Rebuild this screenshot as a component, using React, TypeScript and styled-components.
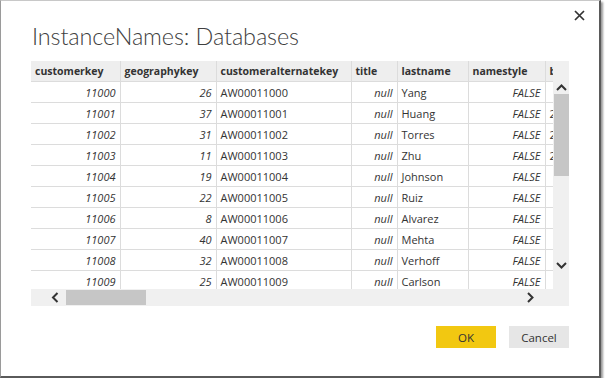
import React from "react";
import styled, { createGlobalStyle } from "styled-components";

const Global = createGlobalStyle`
  html, body { margin: 0; padding: 0; background: #ffffff; }
  body { font-family: "Open Sans", "Noto Sans", sans-serif; color: #333; }
`;

const Dialog = styled.div`
  position: relative;
  box-sizing: border-box;
  width: 601px;
  height: 378px;
  border-left: 1px solid #9a9a9a;
  border-top: 1px solid #c8c8c8;
  border-right: 2px solid #5a5a5a;
  border-bottom: 2px solid #5a5a5a;
  box-shadow: 2px 2px 2px rgba(0, 0, 0, 0.4);
  background: #fff;
  display: flex;
  flex-direction: column;
`;

const TopBar = styled.div`
  height: 19px;
  display: flex;
  justify-content: flex-end;
  align-items: flex-end;
  padding-right: 14px;
`;

const CloseButton = styled.div`
  width: 12px;
  height: 12px;
  display: flex;
  align-items: center;
  justify-content: center;
  margin-bottom: -1px;
`;

const Title = styled.h1`
  margin: 1px 0 0 31px;
  font-family: "Lato", "Open Sans", sans-serif;
  font-weight: 300;
  font-size: 23.4px;
  line-height: 30px;
  color: #404040;
  letter-spacing: -0.1px;
`;

const GridBox = styled.div`
  margin: 10px 0 0 30px;
  width: 538px;
  height: 245px;
  display: flex;
  flex-direction: column;
  background: #f0f0f0;
`;

const GridMain = styled.div`
  display: flex;
  height: 228px;
`;

const Viewport = styled.div`
  width: 522px;
  height: 228px;
  overflow: hidden;
  background: #fff;
`;

const Table = styled.table`
  border-collapse: collapse;
  table-layout: fixed;
  width: 594px;
`;

const HeadCell = styled.th`
  height: 20px;
  padding: 0 4px;
  background: #eeeeee;
  border-right: 1px solid #dcdcdc;
  border-bottom: 1px solid #dcdcdc;
  font-family: "Open Sans", sans-serif;
  font-weight: 700;
  font-size: 10.5px;
  color: #333;
  text-align: left;
  white-space: nowrap;
  overflow: hidden;
`;

const Cell = styled.td<{ $num?: boolean }>`
  height: 20px;
  padding: 0 4px;
  border-right: 1px solid #dcdcdc;
  border-bottom: 1px solid #dcdcdc;
  font-family: "Open Sans", sans-serif;
  font-size: 11px;
  color: #333;
  text-align: ${(p) => (p.$num ? "right" : "left")};
  font-style: ${(p) => (p.$num ? "italic" : "normal")};
  white-space: nowrap;
  overflow: hidden;
`;

const VScroll = styled.div`
  width: 16px;
  height: 228px;
  background: #f0f0f0;
  display: flex;
  flex-direction: column;
  align-items: center;
`;

const ArrowBtn = styled.div<{ $mt?: number }>`
  width: 16px;
  height: 14px;
  margin-top: ${(p) => p.$mt ?? 0}px;
  display: flex;
  align-items: center;
  justify-content: center;
`;

const VThumb = styled.div`
  width: 15px;
  height: 82px;
  background: #c6c6c6;
`;

const HScroll = styled.div`
  height: 17px;
  display: flex;
  align-items: center;
  background: #f0f0f0;
  padding-left: 18px;
`;

const HArrow = styled.div<{ $ml?: number }>`
  width: 12px;
  height: 16px;
  margin-left: ${(p) => p.$ml ?? 0}px;
  display: flex;
  align-items: center;
  justify-content: center;
`;

const HThumb = styled.div`
  width: 80px;
  height: 15px;
  margin-left: 5px;
  background: #c6c6c6;
`;

const Footer = styled.div`
  display: flex;
  justify-content: flex-end;
  gap: 13px;
  margin-top: 20px;
  padding-right: 30px;
`;

const Button = styled.button<{ $primary?: boolean }>`
  width: 60px;
  height: 22px;
  border: none;
  padding: 0;
  background: ${(p) => (p.$primary ? "#f2c811" : "#e6e6e6")};
  font-family: "Open Sans", sans-serif;
  font-size: 11.5px;
  color: #333;
`;

const Chevron = ({ dir }: { dir: "up" | "down" | "left" | "right" }) => {
  const paths: Record<string, string> = {
    up: "M1 7 L5.5 2.5 L10 7",
    down: "M1 2 L5.5 6.5 L10 2",
    left: "M6.5 1 L2 5.5 L6.5 10",
    right: "M2 1 L6.5 5.5 L2 10",
  };
  const vertical = dir === "up" || dir === "down";
  return (
    <svg
      width={vertical ? 11 : 9}
      height={vertical ? 9 : 11}
      viewBox={vertical ? "0 0 11 9" : "0 0 9 11"}
    >
      <path d={paths[dir]} fill="none" stroke="#333" strokeWidth="2" />
    </svg>
  );
};

const columns = [
  { name: "customerkey", width: 89, num: true },
  { name: "geographykey", width: 96, num: true },
  { name: "customeralternatekey", width: 135, num: false },
  { name: "title", width: 46, num: true },
  { name: "lastname", width: 71, num: false },
  { name: "namestyle", width: 77, num: true },
  { name: "birthdate", width: 80, num: false },
];

const lastNames = [
  "Yang",
  "Huang",
  "Torres",
  "Zhu",
  "Johnson",
  "Ruiz",
  "Alvarez",
  "Mehta",
  "Verhoff",
  "Carlson",
];
const geo = [26, 37, 31, 11, 19, 22, 8, 40, 32, 25];
const extra = ["", "2/...", "2/...", "2/...", "", "", "", "", "", ""];

const rows = lastNames.map((ln, i) => [
  String(11000 + i),
  String(geo[i]),
  `AW000${11000 + i}`,
  "null",
  ln,
  "FALSE",
  extra[i],
]);

export default function App() {
  return (
    <>
      <Global />
      <Dialog>
        <TopBar>
          <CloseButton>
            <svg width="11" height="11" viewBox="0 0 11 11">
              <path d="M1 1 L10 10 M10 1 L1 10" stroke="#333" strokeWidth="1.7" />
            </svg>
          </CloseButton>
        </TopBar>
        <Title>InstanceNames: Databases</Title>
        <GridBox>
          <GridMain>
            <Viewport>
              <Table>
                <colgroup>
                  {columns.map((c) => (
                    <col key={c.name} style={{ width: c.width }} />
                  ))}
                </colgroup>
                <thead>
                  <tr>
                    {columns.map((c) => (
                      <HeadCell key={c.name}>{c.name}</HeadCell>
                    ))}
                  </tr>
                </thead>
                <tbody>
                  {rows.map((r, i) => (
                    <tr key={i}>
                      {r.map((v, j) => (
                        <Cell key={j} $num={columns[j].num}>
                          {v}
                        </Cell>
                      ))}
                    </tr>
                  ))}
                </tbody>
              </Table>
            </Viewport>
            <VScroll>
              <ArrowBtn $mt={19}>
                <Chevron dir="up" />
              </ArrowBtn>
              <VThumb />
              <ArrowBtn $mt={82}>
                <Chevron dir="down" />
              </ArrowBtn>
            </VScroll>
          </GridMain>
          <HScroll>
            <HArrow>
              <Chevron dir="left" />
            </HArrow>
            <HThumb />
            <HArrow $ml={378}>
              <Chevron dir="right" />
            </HArrow>
          </HScroll>
        </GridBox>
        <Footer>
          <Button $primary>OK</Button>
          <Button>Cancel</Button>
        </Footer>
      </Dialog>
    </>
  );
}
